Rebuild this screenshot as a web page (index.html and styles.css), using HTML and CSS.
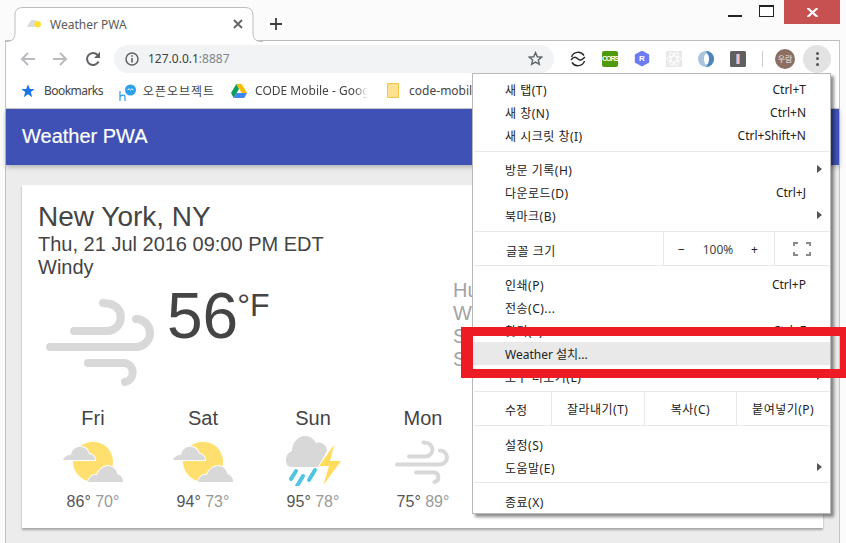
FILE: index.html
```html
<!DOCTYPE html>
<html lang="ko">
<head>
<meta charset="utf-8">
<title>Weather PWA</title>
<link rel="stylesheet" href="styles.css">
</head>
<body>
<svg class="defs" width="0" height="0" aria-hidden="true">
  <symbol id="wind" viewBox="46 298 110 90">
    <g fill="none" stroke="#d8d8d8" stroke-width="8" stroke-linecap="round">
      <path d="M74 331H107A13.7 13.7 0 0 0 107 303.4L103 303"/>
      <path d="M50 347H136A14 14 0 0 0 136 319"/>
      <path d="M88 363H125A9.7 9.7 0 0 1 125 382"/>
    </g>
  </symbol>
  <symbol id="partly" viewBox="0 0 62 43">
    <circle cx="31" cy="21.7" r="20" fill="#ffdf6d"/>
    <path d="M1 20C2 17 5 15 9 15C10 10 14 6 19 7C23 7 26 10 27 14C31 14 33 17 33 20Z" fill="#d8d8d8" stroke="#fff" stroke-width="2" paint-order="stroke"/>
    <path d="M26 42C27 37 31 34 35 35C37 29 42 26 47 26C52 27 55 30 55 34C59 35 61 38 61 42Z" fill="#d8d8d8" stroke="#fff" stroke-width="2" paint-order="stroke"/>
  </symbol>
  <symbol id="storm" viewBox="0 0 56 50">
    <path d="M5 31C1 31 0 27 0 24C0 19 3 16 6 15C6 7 12 0 19 0C24 0 28 3 30 7C36 5 41 9 41 15L32 31Z" fill="#d8d8d8"/>
    <path d="M48.3 8.3L33 30H43L37.3 49L55 25H44Z" fill="#ffdc5c" stroke="#fff" stroke-width="1" paint-order="stroke"/>
    <g stroke="#4fc5df" stroke-width="4" stroke-linecap="round">
      <path d="M5 43L10 35"/><path d="M11 50L17 40"/><path d="M23 44L29 34"/>
    </g>
  </symbol>
</svg>

<div class="tabstrip">
  <div class="tab">
    <svg class="tab-shape" width="258" height="35" viewBox="0 0 258 35"><path d="M0 34.5H2Q10 34.5 10 26V8Q10 .5 18 .5H240Q248 .5 248 8V26Q248 34.5 256 34.5H258" fill="#fff" stroke="#bdbdbd"/></svg>
    <svg class="favicon" width="16" height="14" viewBox="0 0 16 14"><path d="M1 10L5 3H10L12 7L9 10Z" fill="#dcdcdc"/><circle cx="11.700" cy="7.300" r="3.300" fill="#ffe135"/></svg>
    <span class="tab-title">Weather PWA</span>
    <svg class="tab-close" width="10" height="10" viewBox="0 0 10 10"><path d="M1 1L9 9M9 1L1 9" stroke="#5f6368" stroke-width="1.800"/></svg>
  </div>
  <svg class="newtab" width="12" height="12" viewBox="0 0 12 12"><path d="M6 0V12M0 6H12" stroke="#3c4043" stroke-width="1.800"/></svg>
  <div class="winctl">
    <span class="win-min"></span>
    <span class="win-max"></span>
    <span class="win-close"><svg width="11" height="9" viewBox="0 0 11 9"><path d="M.5 0L10.500 9M10.500 0L.5 9" stroke="#fff" stroke-width="2.200"/></svg></span>
  </div>
</div>

<div class="window">
  <div class="toolbar">
    <svg class="nav nav-back" width="15" height="14" viewBox="0 0 15 14"><path d="M15 7H2M8 1L2 7L8 13" fill="none" stroke="#b9bbbe" stroke-width="2"/></svg>
    <svg class="nav nav-fwd" width="15" height="14" viewBox="0 0 15 14"><path d="M0 7H13M7 1L13 7L7 13" fill="none" stroke="#b9bbbe" stroke-width="2"/></svg>
    <svg class="nav nav-reload" width="16" height="16" viewBox="0 0 16 16"><path d="M13.500 10.500A6 6 0 1 1 12.500 4" fill="none" stroke="#5f6368" stroke-width="2"/><path d="M15 .8V7H9Z" fill="#5f6368"/></svg>
    <div class="omnibox">
      <svg class="info" width="14" height="14" viewBox="0 0 14 14"><circle cx="7" cy="7" r="6" fill="none" stroke="#5f6368" stroke-width="1.500"/><path d="M7 6V10.500M7 3.200V4.800" stroke="#5f6368" stroke-width="1.600"/></svg>
      <span class="url">127.0.0.1<span class="url-port">:8887</span></span>
      <svg class="bm-star" width="15" height="15" viewBox="0 0 24 24"><path d="M12 2.500L14.800 9.200L22 9.800L16.500 14.500L18.200 21.500L12 17.800L5.800 21.500L7.500 14.500L2 9.800L9.200 9.200Z" fill="none" stroke="#5f6368" stroke-width="2.200"/></svg>
    </div>
    <div class="exts">
      <svg class="ext" width="16" height="16" viewBox="0 0 16 16"><path d="M14 4.500A7 7 0 0 0 1.500 6M2 11.500A7 7 0 0 0 14.500 10" fill="none" stroke="#2b2b2b" stroke-width="1.400"/><path d="M1 9C4 5 6 6 8 8C10 10 12 9 15 6" fill="none" stroke="#2b2b2b" stroke-width="1.400"/></svg>
      <span class="ext ext-cors">CORS</span>
      <span class="ext ext-r">R</span>
      <svg class="ext" width="16" height="16" viewBox="0 0 16 16"><rect width="16" height="16" fill="#e8e8e8"/><g fill="none" stroke="#fff" stroke-width="1"><ellipse cx="8" cy="8" rx="7" ry="3"/><ellipse cx="8" cy="8" rx="7" ry="3" transform="rotate(60 8 8)"/><ellipse cx="8" cy="8" rx="7" ry="3" transform="rotate(120 8 8)"/></g></svg>
      <svg class="ext" width="16" height="16" viewBox="0 0 16 16"><circle cx="8" cy="8" r="8" fill="#a9c4df"/><path d="M8 0A8 8 0 0 1 8 16C11 12 11 5 8 0Z" fill="#4a86bd"/><ellipse cx="8.500" cy="8" rx="2.500" ry="5.500" fill="#fff"/></svg>
      <svg class="ext" width="16" height="16" viewBox="0 0 16 16"><rect width="16" height="16" rx="1.500" fill="#5f5f5f"/><rect x="6.500" y="3" width="3" height="10" fill="#fff"/><rect x="6.500" y="3" width="1" height="10" fill="#7f9df0"/><rect x="8.500" y="3" width="1" height="10" fill="#ee7a7a"/></svg>
    </div>
    <span class="tb-sep"></span>
    <span class="avatar">우람</span>
    <span class="kebab"><i></i><i></i><i></i></span>
  </div>

  <div class="bookmarks">
    <div class="bm bm-1">
      <svg width="14" height="14" viewBox="0 0 14 14"><path d="M7 .5L8.900 5H13.700L9.800 8.100L11.200 13.200L7 10.300L2.800 13.200L4.200 8.100L.3 5H5.100Z" fill="#1a73e8"/></svg>
      <span>Bookmarks</span>
    </div>
    <div class="bm bm-2">
      <svg width="17" height="18" viewBox="0 0 17 18"><circle cx="11.500" cy="6" r="5.500" fill="#2e9fe6"/><path d="M8.500 6L10.200 4.800L11.500 6L12.800 4.800L14.500 6" stroke="#fff" fill="none" stroke-width="1"/><path d="M1 7V17M1 13C2 10.500 6 10.500 6 13V17" fill="none" stroke="#2e9fe6" stroke-width="1.200"/></svg>
      <span>오픈오브젝트</span>
    </div>
    <div class="bm bm-3">
      <svg width="16" height="14" viewBox="0 0 16 14"><path d="M5.300 0H10.700L16 9H10.700Z" fill="#fbbc04"/><path d="M5.300 0L0 9L2.700 14L8 5Z" fill="#0f9d58"/><path d="M2.700 14H13.300L16 9H5.400Z" fill="#4285f4"/></svg>
      <span class="fade">CODE Mobile - Goog</span>
    </div>
    <div class="bm bm-4">
      <svg width="12" height="15" viewBox="0 0 12 15"><path d="M.5.5H11.500V14.500H.5Z" fill="#fde293" stroke="#f4c542"/></svg>
      <span>code-mobil</span>
    </div>
  </div>

  <header class="appbar">Weather PWA</header>

  <main class="main">
    <section class="card">
      <h1 class="location">New York, NY</h1>
      <div class="line">Thu, 21 Jul 2016 09:00 PM EDT</div>
      <div class="line">Windy</div>
      <div class="now">
        <svg class="now-icon" width="110" height="90"><use href="#wind"/></svg>
        <div class="temp"><span class="temp-value">56</span><span class="temp-unit">°F</span></div>
        <div class="details">
          <div>Humidity</div>
          <div>Wind</div>
          <div>Sunrise</div>
          <div>Sunset</div>
        </div>
      </div>
      <div class="forecast">
        <div class="day">
          <div class="day-name">Fri</div>
          <svg class="day-icon" width="62" height="43"><use href="#partly"/></svg>
          <div class="day-temp">86° <span class="low">70°</span></div>
        </div>
        <div class="day">
          <div class="day-name">Sat</div>
          <svg class="day-icon" width="62" height="43"><use href="#partly"/></svg>
          <div class="day-temp">94° <span class="low">73°</span></div>
        </div>
        <div class="day">
          <div class="day-name">Sun</div>
          <svg class="day-icon day-icon-storm" width="56" height="50"><use href="#storm"/></svg>
          <div class="day-temp">95° <span class="low">78°</span></div>
        </div>
        <div class="day">
          <div class="day-name">Mon</div>
          <svg class="day-icon day-icon-wind" width="55" height="45"><use href="#wind"/></svg>
          <div class="day-temp">75° <span class="low">89°</span></div>
        </div>
      </div>
    </section>
  </main>
</div>

<nav class="menu">
  <div class="group group-first">
    <div class="item"><span>새 탭(T)</span><span>Ctrl+T</span></div>
    <div class="item"><span>새 창(N)</span><span>Ctrl+N</span></div>
    <div class="item"><span>새 시크릿 창(I)</span><span>Ctrl+Shift+N</span></div>
  </div>
  <div class="group group-second">
    <div class="item item-sub"><span>방문 기록(H)</span></div>
    <div class="item"><span>다운로드(D)</span><span>Ctrl+J</span></div>
    <div class="item item-sub"><span>북마크(B)</span></div>
  </div>
  <div class="zoomrow">
    <span class="zoom-label">글꼴 크기</span>
    <div class="zoom-ctl"><span>−</span><span class="zoom-val">100%</span><span>+</span></div>
    <div class="zoom-full"><svg width="18" height="14" viewBox="0 0 18 14"><path d="M1 4V1H5M13 1H17V4M17 10V13H13M5 13H1V10" fill="none" stroke="#8a8a8a" stroke-width="2"/></svg></div>
  </div>
  <div class="group">
    <div class="item"><span>인쇄(P)</span><span>Ctrl+P</span></div>
    <div class="item"><span>전송(C)...</span></div>
    <div class="item"><span>찾기(F)</span><span>Ctrl+F</span></div>
    <div class="item item-active"><span>Weather 설치...</span></div>
    <div class="item item-sub"><span>도구 더보기(L)</span></div>
  </div>
  <div class="editrow">
    <span class="edit-label">수정</span>
    <span class="edit-btn">잘라내기(T)</span>
    <span class="edit-btn">복사(C)</span>
    <span class="edit-btn">붙여넣기(P)</span>
  </div>
  <div class="group">
    <div class="item"><span>설정(S)</span></div>
    <div class="item item-sub"><span>도움말(E)</span></div>
  </div>
  <div class="group group-last">
    <div class="item"><span>종료(X)</span></div>
  </div>
</nav>

<div class="callout"></div>
</body>
</html>
```

FILE: styles.css
```css
* { box-sizing: border-box; }
html, body { margin: 0; height: 543px; overflow: hidden; }
body {
  position: relative;
  background: #fbfbfb;
  font-family: "Noto Sans", "Noto Sans CJK KR", sans-serif;
  font-size: 12px;
  color: #3c4043;
}
.defs { position: absolute; }

/* tab strip */
.tabstrip {
  display: flex;
  align-items: flex-start;
  height: 41px;
  padding-left: 15px;
  position: relative;
  z-index: 2;
}
.tab {
  position: relative;
  width: 238px;
  height: 34px;
  margin-top: 7px;
  display: flex;
  align-items: center;
  padding: 0 10px 0 11px;
}
.tab-shape { position: absolute; left: -10px; top: 0; }
.favicon, .tab-title, .tab-close { position: relative; }
.favicon { flex: none; }
.tab-title { flex: 1; margin-left: 8px; color: #5a5a5a; }
.tab-close { flex: none; }
.newtab { margin: 18px 0 0 17px; }
.winctl { margin-left: auto; display: flex; margin-right: 6px; }
.win-min { width: 14px; height: 2px; margin: 15px 17px 0 0; background: #222; }
.win-max { width: 15px; height: 12px; margin: 5px 10px 0 0; border: 1px solid #222; border-top-width: 2px; background: #fff; }
.win-close {
  width: 56px; height: 24px;
  background: #c75050;
  display: flex; align-items: center; justify-content: center;
}

/* window */
.window {
  margin: -1px 6px 0 5px;
  height: 503px;
  border-left: 1px solid #c4c4c4;
  border-right: 1px solid #c4c4c4;
  border-top: 1px solid #bdbdbd;
  background: #fff;
  display: flex;
  flex-direction: column;
  position: relative;
}

.toolbar {
  height: 35px;
  flex: none;
  display: flex;
  align-items: center;
  padding-left: 14px;
}
.nav { flex: none; }
.nav-fwd { margin-left: 18px; }
.nav-reload { margin-left: 17px; }
.omnibox {
  flex: none;
  margin-left: 13px;
  width: 440px;
  height: 28px;
  border-radius: 14px;
  background: #f1f3f4;
  display: flex;
  align-items: center;
  padding: 0 11px;
}
.info { flex: none; }
.url { flex: 1; margin-left: 9px; color: #3c4043; }
.url-port { color: #80868b; }
.bm-star { flex: none; }
.exts { display: flex; align-items: center; gap: 16px; margin-left: 16px; }
.ext { flex: none; width: 16px; height: 16px; display: block; }
.ext-cors {
  background: #4f9a0a;
  border-radius: 2px;
  color: #fff;
  font: 700 7px/16px "Liberation Sans", sans-serif;
  letter-spacing: -1.050px;
  white-space: nowrap;
  text-align: center;
}
.ext-r {
  background: #6b7cf0;
  clip-path: polygon(50% 0, 95% 25%, 95% 75%, 50% 100%, 5% 75%, 5% 25%);
  color: #fff;
  font: 700 8px/16px "Liberation Sans", sans-serif;
  text-align: center;
}
.tb-sep { width: 1px; height: 16px; background: #ccc; margin-left: 16px; }
.avatar {
  width: 20px; height: 20px; border-radius: 50%;
  background: #8d6e63; color: #eee;
  font-size: 8px; line-height: 20px; text-align: center;
  margin-left: 12px;
}
.kebab {
  width: 28px; height: 28px; border-radius: 50%;
  background: #e3e3e3;
  margin-left: 8px;
  display: flex; flex-direction: column; align-items: center; justify-content: center; gap: 2.500px;
}
.kebab i { width: 3px; height: 3px; border-radius: 50%; background: #555; }

.bookmarks {
  height: 33px;
  flex: none;
  display: flex;
  align-items: center;
  padding: 0 0 3px 15px;
  border-bottom: 1px solid #d0d0d0;
  white-space: nowrap;
  overflow: hidden;
}
.bm { display: flex; align-items: center; color: #444; flex: none; }
.bm span { margin-left: 9px; }
.bm-1 span { letter-spacing: -.55px; }
.bm-2 { margin-left: 16px; }
.bm-2 svg { margin-top: 5px; }
.bm-2 span { margin-left: 7px; letter-spacing: 1px; }
.bm-3 { margin-left: 16px; }
.bm-3 span { margin-left: 8px; width: 113px; overflow: hidden; -webkit-mask-image: linear-gradient(90deg, #000 88%, transparent); mask-image: linear-gradient(90deg, #000 88%, transparent); }
.bm-4 { margin-left: 19px; }
.bm-4 span { margin-left: 10px; }

/* app */
.appbar {
  height: 56px;
  flex: none;
  background: #3f51b5;
  color: #fff;
  font: 500 20px/54px "Liberation Sans", sans-serif;
  -webkit-text-stroke: .2px #fff;
  padding-left: 16px;
  box-shadow: 0 2px 5px rgba(0,0,0,.26);
  position: relative;
  z-index: 1;
}
.main {
  flex: 1;
  background: #ececec;
  padding: 20px 16px 0;
  font-family: "Liberation Sans", sans-serif;
  color: #444;
}
.card {
  height: 343px;
  background: #fff;
  padding: 16px 16px 0;
  box-shadow: 0 2px 2px rgba(0,0,0,.3);
}
.location { margin: 0; font-size: 28px; line-height: 32px; font-weight: 400; }
.line { font-size: 20px; line-height: 23px; }
.now { display: flex; height: 128px; }
.now-icon { flex: none; margin: 19px 9px 0 8px; }
.temp { flex: none; width: 288px; display: flex; align-items: flex-start; }
.temp-value { font-size: 64px; line-height: 64px; margin: 5px 0 0 2px; }
.temp-unit { font-size: 32px; line-height: 32px; margin: 10px 0 0 -1px; }
.details { font-size: 20px; line-height: 23px; color: #a3a3a3; white-space: nowrap; }
.forecast { display: grid; grid-template-columns: repeat(4, 110px); }
.day { display: flex; flex-direction: column; align-items: center; }
.day-name { font-size: 20px; line-height: 23px; }
.day-icon { margin-top: 10px; height: 43px; }
.day-icon-storm { height: 50px; margin: 6px 0 -3px 2px; }
.day-icon-wind { height: 45px; margin: 9.500px 0 -1.500px -2px; }
.day-temp { font-size: 16px; line-height: 18px; margin-top: 10px; color: #555; }
.low { color: #9a9a9a; }

/* menu */
.menu {
  position: absolute;
  left: 472px;
  top: 73px;
  width: 359px;
  height: 441px;
  background: #fff;
  border: 1px solid #b9b9b9;
  box-shadow: 3px 3px 3px rgba(0,0,0,.45);
  z-index: 3;
  color: #222;
  font-family: "Noto Sans", "Noto Sans CJK KR", sans-serif;
  font-size: 12px;
}
.group { padding: 7px 0 3px; border-bottom: 1px solid #e8e8e8; margin: 0 1px; }
.group-first { padding: 4px 0 4px; }
.group-second { padding: 6px 0 4px; }
.group-last { border-bottom: 0; padding-top: 7px; }
.item {
  height: 23px;
  margin: 0 -1px;
  padding: 0 24px 0 32px;
  display: flex;
  justify-content: space-between;
  align-items: center;
  position: relative;
}
.item > span:first-child { letter-spacing: .5px; }
.item-active { background: #e9e9e9; }
.item-active > span:first-child { letter-spacing: 0; }
.item-sub::after {
  content: "";
  position: absolute;
  right: 8px;
  top: 7px;
  border-left: 5px solid #555;
  border-top: 4.500px solid transparent;
  border-bottom: 4.500px solid transparent;
}
.zoomrow, .editrow {
  display: flex;
  align-items: center;
  height: 34px;
  margin: 0 1px;
  border-bottom: 1px solid #e8e8e8;
}
.zoom-label { width: 189px; padding: 4px 0 0 32px; letter-spacing: .5px; }
.zoom-ctl {
  width: 112px; height: 100%;
  border-left: 1px solid #e8e8e8;
  border-right: 1px solid #e8e8e8;
  display: flex; align-items: center; justify-content: space-between;
  padding: 2px 16px 0 14px;
}
.zoom-val { font-size: 12px; color: #444; }
.zoom-full { flex: 1; display: flex; justify-content: center; padding-right: 1px; }
.edit-label { width: 77px; padding: 2px 0 0 31px; }
.edit-btn {
  width: 93px; height: 100%;
  border-left: 1px solid #e8e8e8;
  display: flex; align-items: center; justify-content: center;
  letter-spacing: .5px;
}

/* red annotation */
.callout {
  position: absolute;
  left: 461px;
  top: 327px;
  right: 0;
  height: 51px;
  border-style: solid;
  border-color: #ed1c24;
  border-width: 9px 6px 9px 12px;
  z-index: 4;
}
```
